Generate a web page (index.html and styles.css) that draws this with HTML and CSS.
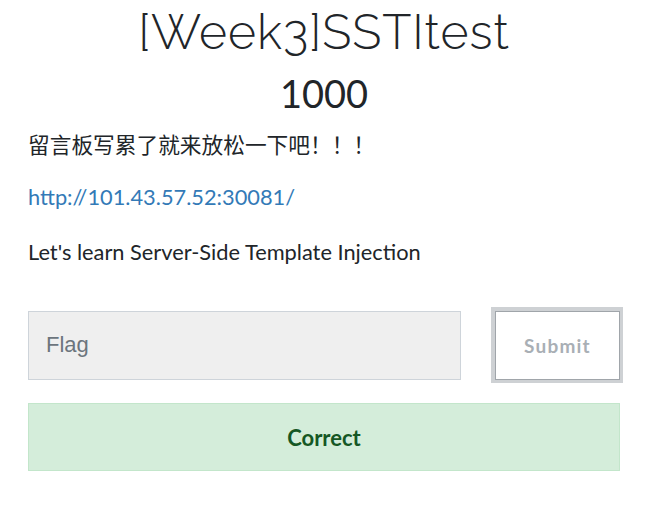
FILE: index.html
```html
<!DOCTYPE html>
<html>
<head>
<meta charset="utf-8">
<link rel="stylesheet" href="styles.css">
</head>
<body>
<div class="modal-body">
  <h2 class="challenge-name">[Week3]SSTItest</h2>
  <h3 class="challenge-value">1000</h3>
  <div class="desc">
    <p class="cn">留言板写累了就来放松一下吧！！！</p>
    <p class="link"><a href="#">http://101.43.57.52:30081/</a></p>
    <p class="last">Let's learn Server-Side Template Injection</p>
  </div>
  <div class="form-row">
    <input class="flag-input" type="text" placeholder="Flag">
    <div class="btn-wrap"><button class="submit-btn">Submit</button></div>
  </div>
  <div class="alert">Correct</div>
</div>
</body>
</html>
```
FILE: styles.css
```css
html, body {
  margin: 0;
  padding: 0;
  background: #fff;
}
body {
  font-family: "Lato", "Noto Sans CJK SC", sans-serif;
  color: #212529;
  font-size: 21.8px;
}
.modal-body {
  padding: 4px 34px 0 28px;
}
.challenge-name {
  font-family: "Raleway", "Lato", sans-serif;
  font-weight: 300;
  font-size: 48px;
  letter-spacing: 1px;
  text-align: center;
  margin: 0;
  line-height: 56px;
  color: #212529;
}
.challenge-value {
  font-weight: 400;
  font-size: 38px;
  text-align: center;
  margin: 8px 0 0 0;
  line-height: 50px;
}
.desc p {
  margin: 0;
  line-height: 30px;
}
.desc .cn {
  font-size: 21.7px;
  margin-top: 12px;
  margin-bottom: 22px;
}
.desc .link {
  margin-bottom: 25px;
}
.desc a {
  color: #337ab7;
  text-decoration: none;
}
.form-row {
  display: flex;
  align-items: center;
  gap: 30px;
  margin-top: 40px;
  margin-right: -3px;
}
.flag-input {
  flex: 1;
  min-width: 0;
  height: 69px;
  box-sizing: border-box;
  background: #efefef;
  border: 1px solid #ced4da;
  padding: 0 17px;
  font-family: "Liberation Sans", sans-serif;
  font-size: 22px;
  color: #495057;
  outline: none;
}
.flag-input::placeholder {
  color: #6c757d;
}
.btn-wrap {
  border-style: solid;
  border-color: #ced1d4;
  border-width: 4px 3px 3px 4px;
  background: #fff;
}
.submit-btn {
  display: block;
  width: 125px;
  height: 69px;
  box-sizing: border-box;
  border: 1px solid #a0a5aa;
  background: #fff;
  font-family: "Lato", sans-serif;
  font-weight: 700;
  font-size: 19px;
  letter-spacing: 1.2px;
  color: #a9afb5;
  padding: 0;
}
.alert {
  margin-top: 20px;
  height: 68px;
  box-sizing: border-box;
  background: #d4edda;
  border: 1px solid #c3e6cb;
  color: #155724;
  display: flex;
  align-items: center;
  justify-content: center;
  font-size: 22px;
  font-weight: 700;
  width: 592px;
}
```
